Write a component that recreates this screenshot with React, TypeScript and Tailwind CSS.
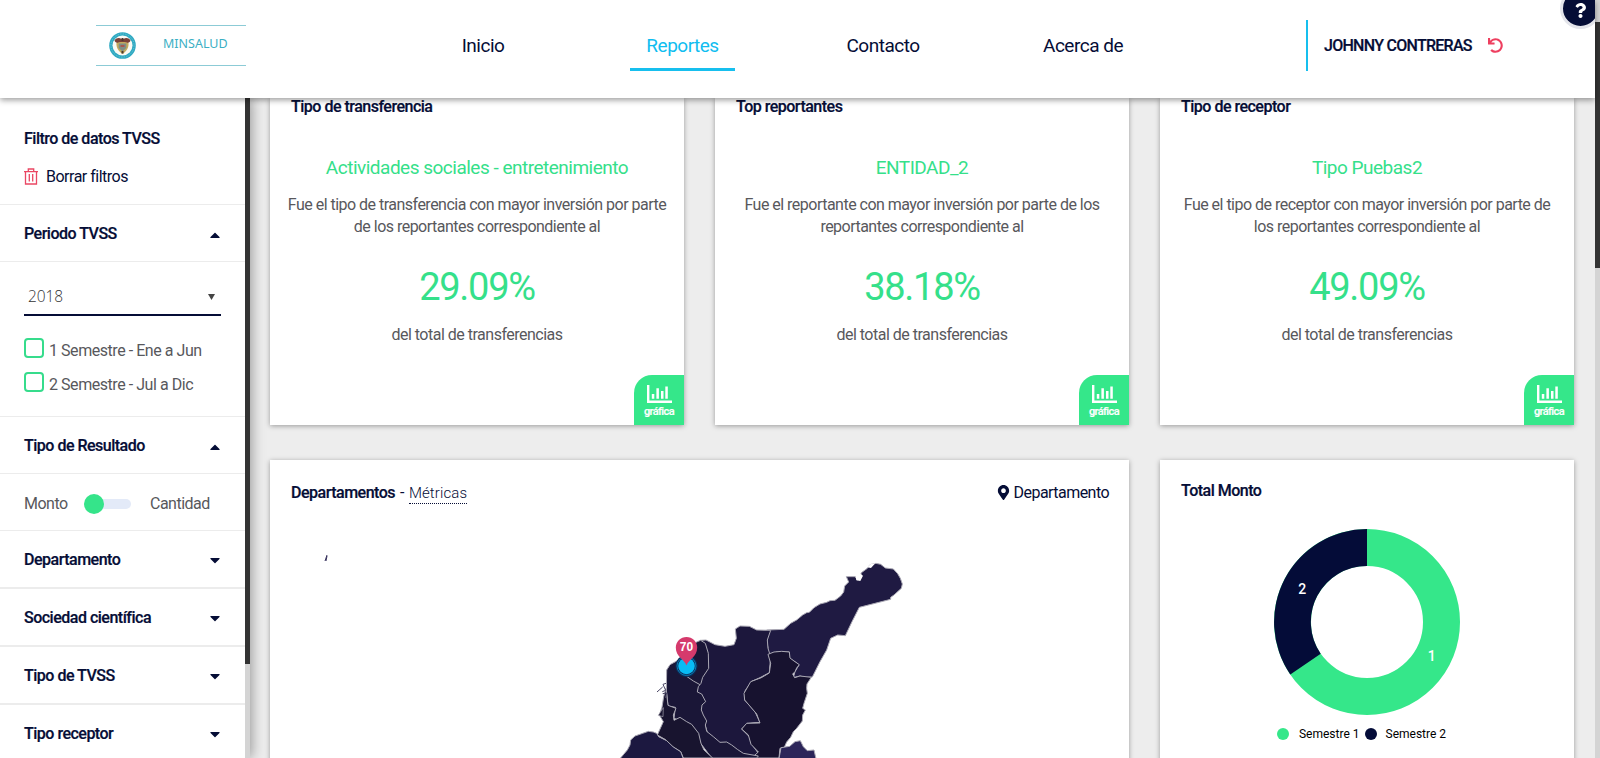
import { FaCaretDown, FaCaretUp, FaMapMarkerAlt, FaQuestion, FaUndo } from 'react-icons/fa';

const heading = 'font-medium text-[#050d36] [-webkit-text-stroke:0.2px_#050d36]';

function TrashIcon() {
  return (
    <svg className="mb-[2px]" width="14" height="17" viewBox="0 0 14 17" fill="none" stroke="#ea4763" strokeWidth="1.3">
      <path d="M0 3.600h14M4.300 3.300V1h5.400v2.300M1.500 3.600V16h11V3.600M5.300 6v7.500M8.700 6v7.500" />
    </svg>
  );
}

function ChartIcon() {
  return (
    <svg width="25" height="18" viewBox="0 0 25 18" fill="#fff">
      <path d="M0 0h2.400v15.600H25V18H0zM4.800 9h2.500v4.800H4.800zM9.400 3.200h2.500v10.600H9.400zM14 6h2.500v7.800H14zM18.300 1.500h2.500v12.300h-2.500z" />
    </svg>
  );
}

function Emblem() {
  return (
    <svg width="28" height="28" viewBox="0 0 28 28">
      <circle cx="13.500" cy="13.500" r="13.300" fill="#2fa9c2" />
      <circle cx="13.500" cy="13.500" r="11.600" fill="none" stroke="#7ccad8" strokeWidth="0.8" strokeDasharray="1.2 1.4" />
      <circle cx="13.500" cy="13.500" r="10" fill="#fbfaf4" />
      <path d="M5.500 8.500c2-3 5-3 7-1.500h2c2-1.500 5-1.500 7 1.500-.5 2-2.500 2.500-4 3h-8c-1.500-.5-3.500-1-4-3z" fill="#7a4038" />
      <path d="M7.500 11c2-1.500 10-1.500 12 0 .5 4.500-2 8.500-6 11-4-2.500-6.500-6.500-6-11z" fill="#c4a95c" />
      <path d="M9.700 11.500h7.600v4.500l-3.800 3.500L9.700 16z" fill="#7e8f86" />
      <path d="M11.500 13h4v2h-4z" fill="#a8584f" />
      <path d="M12.500 19h2v2.500h-2zM12.500 6h2v3h-2z" fill="#4a3a30" />
    </svg>
  );
}

function Header() {
  return (
    <header className="relative z-20 flex h-[98px] shrink-0 bg-white shadow-[0_2px_6px_rgba(0,0,0,0.4)]">
      <div className="ml-24 mt-[25px] flex h-[41px] w-[150px] items-center border-y border-[#8ccbd6] pl-[13px]">
        <Emblem />
        <span className="mb-[2px] ml-[26px] font-['Noto_Sans',sans-serif] text-[12.500px] tracking-normal text-[#3bafc4]">
          MINSALUD
        </span>
      </div>
      <nav className="flex pl-[137px] pt-5 text-[19px] text-[#050d36]">
        {['Inicio', 'Reportes', 'Contacto', 'Acerca de'].map((label) => (
          <div key={label} className="flex w-[200px] justify-center">
            <a
              className={
                label === 'Reportes'
                  ? '-ml-px flex h-[51px] w-[105px] items-center justify-center border-b-[3px] border-[#17bfee] pt-[5px] text-[#10bdf0]'
                  : 'flex h-[51px] items-center pt-[2px]'
              }
            >
              {label}
            </a>
          </div>
        ))}
      </nav>
      <div className="ml-[123px] mt-5 flex h-[51px] items-center border-l-2 border-[#17bfee] pl-4">
        <span className="pt-px text-base font-medium tracking-[-0.720px] text-[#050d36] [-webkit-text-stroke:0.2px_#050d36]">
          JOHNNY CONTRERAS
        </span>
        <FaUndo className="mb-px ml-4 text-[15px] text-[#ee3f5f]" />
      </div>
      <div className="absolute right-0 top-0 flex h-[30px] w-[44px] justify-end overflow-hidden">
        <div className="-mt-[12px] mr-[-6px] flex h-[41px] w-[41px] shrink-0 items-center justify-center rounded-full border-[3px] border-[#e3e4ea] bg-[#050d36]">
          <FaQuestion className="mr-px mt-[3px] text-[15px] text-white" />
        </div>
      </div>
    </header>
  );
}

function FilterRow({ label, open, size }: { label: string; open?: boolean; size: string }) {
  return (
    <div className={`flex items-center justify-between border-[#ececec] pl-6 pr-[22px] pt-[2px] ${size}`}>
      <span className={heading}>{label}</span>
      {open ? (
        <FaCaretUp className="mt-px text-[16px] text-[#050d36]" />
      ) : (
        <FaCaretDown className="text-[16px] text-[#050d36]" />
      )}
    </div>
  );
}

function CheckRow({ label }: { label: string }) {
  return (
    <div className="flex h-[34px] items-start">
      <span className="h-5 w-5 rounded-[4px] border-2 border-[#36dc8c]" />
      <span className="ml-[5px] leading-[25px] tracking-[-0.450px] text-[#58585c]">{label}</span>
    </div>
  );
}

function Sidebar() {
  return (
    <aside className="z-10 flex w-[250px] shrink-0 shadow-[2px_0_12px_rgba(0,0,0,0.35)]">
      <div className="w-[245px] bg-white">
        <div className="flex h-[107px] flex-col border-b border-[#ececec] pl-6 pt-[29px]">
          <span className={heading}>Filtro de datos TVSS</span>
          <span className="mt-[14px] flex items-center text-[#050d36]">
            <TrashIcon />
            <span className="ml-[8px]">Borrar filtros</span>
          </span>
        </div>
        <FilterRow label="Periodo TVSS" open size="h-[57px] border-b" />
        <div className="h-[155px] border-b border-[#ececec] pl-6 pt-[22px]">
          <div className="flex h-[32px] w-[197px] items-center justify-between border-b-2 border-[#050d36] pb-[4px] pl-1 pr-[6px]">
            <span className="font-['Open_Sans',sans-serif] text-[15.500px] font-light tracking-[-0.1px] text-[#333]">2018</span>
            <svg width="7" height="6" viewBox="0 0 7 6">
              <path d="M0 0h7L3.500 6z" fill="#444" />
            </svg>
          </div>
          <div className="pt-[22px]">
            <CheckRow label="1 Semestre - Ene a Jun" />
            <CheckRow label="2 Semestre - Jul a Dic" />
          </div>
        </div>
        <FilterRow label="Tipo de Resultado" open size="h-[57px] border-b" />
        <div className="flex h-[57px] items-center border-b border-[#ececec] pl-6 pt-[3px] text-[#58585c]">
          <span className="w-[60px]">Monto</span>
          <span className="flex w-[47px] items-center pt-px">
            <span className="z-10 h-5 w-5 rounded-full bg-[#35e48a]" />
            <span className="-ml-2 h-[10px] w-[35px] rounded-full bg-[#e3eaf8]" />
          </span>
          <span className="ml-[19px]">Cantidad</span>
        </div>
        <FilterRow label="Departamento" size="h-[58px] border-b-2" />
        <FilterRow label="Sociedad científica" size="h-[58px] border-b-2" />
        <FilterRow label="Tipo de TVSS" size="h-[58px] border-b-2" />
        <FilterRow label="Tipo receptor" size="h-[58px] border-b-2" />
      </div>
      <div className="w-[5px] bg-[#d4d4d4]">
        <div className="h-[566px] bg-[#333]" />
      </div>
    </aside>
  );
}

const cardShadow = 'bg-white shadow-[0_1px_5px_rgba(0,0,0,0.35)]';

function StatCard(p: { title: string; name: string; lines: string[]; value: string }) {
  return (
    <section className={`flex h-[327px] flex-col items-center text-[#58585c] ${cardShadow}`}>
      <h2 className={`h-[58px] self-start pl-[21px] leading-[17px] ${heading}`}>{p.title}</h2>
      <div className="h-[30px] text-[19px] leading-[24px] text-[#35e08a]">{p.name}</div>
      <p className="mt-[8px] text-center leading-[22px] tracking-[-0.520px]">
        {p.lines[0]}
        <br />
        {p.lines[1]}
      </p>
      <div className="mt-[25px] text-[38px] leading-[48px] tracking-[-1.300px] text-[#35e08a]">{p.value}</div>
      <div className="mt-[12px] leading-6">del total de transferencias</div>
      <div className="mt-auto flex h-[50px] w-[50px] flex-col items-center self-end rounded-tl-[18px] bg-[#35e78a] pt-[10px] text-[11px] leading-[17px] text-white">
        <ChartIcon />
        <span className="font-medium tracking-[-0.600px] [-webkit-text-stroke:0.2px_#fff]">gráfica</span>
      </div>
    </section>
  );
}

function ColombiaMap() {
  return (
    <svg className="block" width="859" height="238" viewBox="0 0 859 238">
      <path d="M57 35l-2 6M57 36l-1 5" stroke="#3a3560" strokeWidth="1" />
      <g transform="translate(330 20) scale(.33333)" stroke="#aaa8b4" strokeWidth="3" strokeLinejoin="round">
        <path
          fill="#1f1a42"
          d="M500 270L552 268 572 250 590 240 608 225 620 218 628 217 642 203 660 192 680 187 690 182 705 181 722 168 731 156 734 138 746 126 739 110 766 110 772 120 784 112 783 99 802 85 810 74 828 70 842 73 856 84 880 87 893 101 901 115 907 132 904 145 882 165 872 172 872 178 825 190 778 202 756 245 736 287 713 285 692 295 680 330 660 365 637 411 615 412 600 408 580 413 585 395 597 375 583 364 568 355 568 336 530 336 500 350 504 325 500 300z"
        />
        <path
          fill="#1c173c"
          d="M302 301L318 300 345 314 375 319 402 314 409 295 406 267 420 258 448 259 470 270 512 271 502 300 504 325 512 350 508 398 480 413 455 424 435 453 434 480 465 515 480 547 442 550 425 567 448 590 455 612 475 640 465 654 430 654 330 600 290 480z"
        />
        <path
          fill="#17122f"
          d="M504 343L522 336 545 334 568 336 570 354 582 363 598 374 590 384 585 395 578 402 584 413 600 408 634 412 621 432 620 445 622 460 612 490 608 505 616 510 608 525 607 543 590 565 580 575 572 592 560 606 553 622 540 625 537 654H455L475 636 453 613 445 585 425 567 440 550 480 549 470 522 434 480 432 460 452 425 484 413 508 399 512 370z"
        />
        <path
          fill="#1a1637"
          d="M302 301L290 306 232 362 210 374 200 390 199 450 204 498 226 502 222 535 260 548 290 575 302 610 335 654H470L475 648 430 640 412 628 395 615 380 606 360 607 340 590 320 574 316 555 320 543 310 525 304 510 306 495 317 485 305 462 292 456 295 440 303 430 308 412 326 385 325 340 316 310z"
        />
        <path
          fill="#18142f"
          d="M198 445L191 470 186 502 178 525 190 545 172 585 195 598 218 620 242 635 250 654H338L312 630 303 610 296 580 275 553 260 545 240 532 222 541 220 525 228 505 204 496z"
        />
        <path fill="#1c1840" d="M60 656L82 630 90 615 92 600 105 588 128 580 145 574 160 576 170 580 176 590 200 602 220 621 242 635 250 656z" />
        <path fill="#2c2559" d="M537 656L543 623 569 619 585 605 601 602 610 620 622 632 642 630 648 656z" />
        <path fill="none" d="M238 390L257 407 280 423 300 434" />
        <path fill="none" strokeWidth="3" stroke="#4a4664" d="M198 430l-9 3 8 18-10 4M188 441l-17 15M188 461l12-2-4 15" />
        <path fill="#18142f" strokeWidth="2" d="M190 503l-15 23 14 4z" />
        <path fill="#fff" stroke="none" d="M767 111l10-12 12 8-8 16-12-2zM802 82l10-10 14-2-13 14z" />
      </g>
      <circle cx="416.500" cy="146" r="11" fill="#0b2b56" />
      <circle cx="416.500" cy="146" r="9.500" fill="none" stroke="#0a7bb5" strokeWidth="1" />
      <circle cx="416.500" cy="146" r="8.300" fill="#08bbf5" />
      <path
        d="M416.500 145.500c-2-6-10.700-8.500-10.700-17.900a10.700 10.700 0 0 1 21.400 0c0 9.400-8.700 11.900-10.700 17.900z"
        fill="#d53a6c"
      />
      <text x="416.500" y="131" textAnchor="middle" fontSize="12" fill="#fff" className="font-['Liberation_Sans',sans-serif] font-bold tracking-normal">
        70
      </text>
    </svg>
  );
}

function Donut() {
  return (
    <svg className="block" width="188" height="188" viewBox="0 0 188 188">
      <circle cx="94" cy="94" r="74.500" fill="none" stroke="#35e78a" strokeWidth="37" />
      <path d="M94 1A93 93 0 0 0 17.300 146.500L47.700 125.700A56 56 0 0 1 94 38z" fill="#040c38" />
      <g fill="#fff" fontSize="14" className="font-medium" textAnchor="middle">
        <text x="158.500" y="133">1</text>
        <text x="29" y="65.500">2</text>
      </g>
    </svg>
  );
}

export default function App() {
  return (
    <div className="flex h-[758px] w-[1600px] overflow-hidden bg-[#ededed] font-['Roboto',sans-serif] text-base tracking-[-0.5px]">
      <div className="flex w-[1595px] shrink-0 flex-col">
        <Header />
        <div className="flex min-h-0 flex-1">
          <Sidebar />
          <main className="grid flex-1 auto-rows-max grid-cols-3 gap-x-[31px] gap-y-[35px] pl-[20px] pr-[21px]">
            <StatCard
              title="Tipo de transferencia"
              name="Actividades sociales - entretenimiento"
              lines={['Fue el tipo de transferencia con mayor inversión por parte', 'de los reportantes correspondiente al']}
              value="29.09%"
            />
            <StatCard
              title="Top reportantes"
              name="ENTIDAD_2"
              lines={['Fue el reportante con mayor inversión por parte de los', 'reportantes correspondiente al']}
              value="38.18%"
            />
            <StatCard
              title="Tipo de receptor"
              name="Tipo Puebas2"
              lines={['Fue el tipo de receptor con mayor inversión por parte de', 'los reportantes correspondiente al']}
              value="49.09%"
            />
            <section className={`col-span-2 h-[320px] ${cardShadow}`}>
              <div className="flex h-[60px] items-end justify-between px-[20px] pb-[15px] text-[#050d36]">
                <div className="flex">
                  <h2 className={`pl-px ${heading}`}>Departamentos</h2>
                  <span className="mx-[5px]">-</span>
                  <span className="-mb-[2px] h-[23px] border-b border-dotted border-[#050d36] text-[15px] font-light leading-6 tracking-[0.1px]">
                    Métricas
                  </span>
                </div>
                <div className="flex items-center tracking-[-0.550px]">
                  <FaMapMarkerAlt className="mb-[2px] mr-[3px] text-[15px]" />
                  Departamento
                </div>
              </div>
              <ColombiaMap />
            </section>
            <section className={`flex h-[320px] flex-col items-center ${cardShadow}`}>
              <h2 className={`self-start pl-[21px] pt-[19px] ${heading}`}>Total Monto</h2>
              <div className="mt-[25px]">
                <Donut />
              </div>
              <div className="mr-[11px] mt-[9px] flex items-center text-[12px] tracking-normal text-black">
                <span className="mr-[10px] h-3 w-3 rounded-full bg-[#35e78a]" />
                Semestre 1
                <span className="ml-[5px] mr-[9px] h-3 w-3 rounded-full bg-[#040c38]" />
                Semestre 2
              </div>
            </section>
          </main>
        </div>
      </div>
      <div className="w-[5px] bg-[#d4d4d4] pt-[22px]">
        <div className="h-[246px] bg-[#333]" />
      </div>
    </div>
  );
}
